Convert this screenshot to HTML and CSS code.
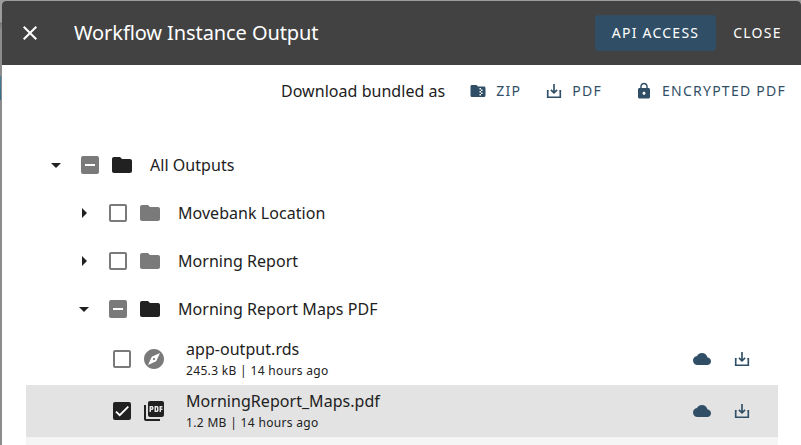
FILE: index.html
```html
<!DOCTYPE html>
<html lang="en">
<head>
<meta charset="utf-8">
<title>Workflow Instance Output</title>
<link rel="stylesheet" href="styles.css">
</head>
<body>
<svg class="defs" aria-hidden="true">
  <symbol id="folder" viewBox="0 0 24 24"><path d="M10 4H4c-1.1 0-1.99.9-1.99 2L2 18c0 1.100.9 2 2 2h16c1.100 0 2-.9 2-2V8c0-1.100-.9-2-2-2h-8l-2-2z"/></symbol>
  <symbol id="zip" viewBox="0 0 24 24"><path d="M20 6h-8l-2-2H4c-1.100 0-2 .9-2 2v12c0 1.100.9 2 2 2h16c1.100 0 2-.9 2-2V8c0-1.100-.9-2-2-2zm-2 6h-2v2h2v2h-2v2h-2v-2h2v-2h-2v-2h2v-2h-2V8h2v2h2v2z"/></symbol>
  <symbol id="download" viewBox="0 0 18 18"><path d="M3.700 8.700h-1v6.500h12.600V8.700h-1M9 2v8.500M5.900 7.800L9 10.900l3.100-3.100" fill="none" stroke="currentColor" stroke-width="1.650"/></symbol>
  <symbol id="lock" viewBox="0 0 24 24"><path d="M18 8h-1V6c0-2.760-2.240-5-5-5S7 3.240 7 6v2H6c-1.100 0-2 .9-2 2v10c0 1.100.9 2 2 2h12c1.100 0 2-.9 2-2V10c0-1.100-.9-2-2-2zm-6 9c-1.100 0-2-.9-2-2s.9-2 2-2 2 .9 2 2-.9 2-2 2zm3.100-9H8.900V6c0-1.710 1.390-3.100 3.100-3.100s3.100 1.390 3.100 3.100v2z"/></symbol>
  <symbol id="cloud" viewBox="0 0 24 24"><path d="M19.350 10.040C18.670 6.590 15.640 4 12 4 9.110 4 6.600 5.640 5.350 8.040 2.340 8.360 0 10.910 0 14c0 3.310 2.690 6 6 6h13c2.760 0 5-2.240 5-5 0-2.640-2.050-4.780-4.650-4.960z"/></symbol>
  <symbol id="compass" viewBox="0 0 24 24"><path d="M12 10.900c-.61 0-1.100.49-1.100 1.100s.49 1.100 1.100 1.100 1.100-.49 1.100-1.100-.49-1.100-1.100-1.100zM12 2C6.480 2 2 6.480 2 12s4.480 10 10 10 10-4.480 10-10S17.520 2 12 2zm2.190 12.190L6 18l3.810-8.190L18 6l-3.810 8.190z"/></symbol>
  <symbol id="pdf" viewBox="0 0 24 24"><path d="M20 2H8c-1.100 0-2 .9-2 2v12c0 1.100.9 2 2 2h12c1.100 0 2-.9 2-2V4c0-1.100-.9-2-2-2zm-8.500 7.500c0 .83-.67 1.500-1.500 1.500H9v2H7.500V7H10c.83 0 1.500.67 1.500 1.500v1zm5 2c0 .83-.67 1.500-1.500 1.500h-2.500V7H15c.83 0 1.500.67 1.500 1.500v3zm4-3H19v1h1.500V11H19v2h-1.500V7h3v1.500zM9 9.500h1v-1H9v1zM4 6H2v14c0 1.100.9 2 2 2h14v-2H4V6zm10 5.500h1v-3h-1v3z"/></symbol>
  <symbol id="down" viewBox="0 0 24 24"><path d="M7 10l5 5 5-5z"/></symbol>
  <symbol id="right" viewBox="0 0 24 24"><path d="M10 17l5-5-5-5v10z"/></symbol>
  <symbol id="close" viewBox="0 0 24 24"><path d="M19 6.410L17.590 5 12 10.590 6.410 5 5 6.410 10.590 12 5 17.590 6.410 19 12 13.410 17.590 19 19 17.590 13.410 12z"/></symbol>
</svg>
<div class="dialog">
  <header class="toolbar">
    <svg class="icon close"><use href="#close"/></svg>
    <h1>Workflow Instance Output</h1>
    <button class="btn primary">API ACCESS</button>
    <button class="btn plain">CLOSE</button>
  </header>
  <div class="bundle">
    <span class="label">Download bundled as</span>
    <button class="btn link"><svg class="small"><use href="#zip"/></svg>ZIP</button>
    <button class="btn link"><svg class="small"><use href="#download"/></svg>PDF</button>
    <button class="btn link lock"><svg class="small"><use href="#lock"/></svg>ENCRYPTED PDF</button>
  </div>
  <main class="tree">
    <div class="node">
      <svg class="icon arrow"><use href="#down"/></svg><span class="box mixed"></span><svg class="icon"><use href="#folder"/></svg><span class="name">All Outputs</span>
    </div>
    <div class="node child">
      <svg class="icon arrow"><use href="#right"/></svg><span class="box"></span><svg class="icon muted"><use href="#folder"/></svg><span class="name">Movebank Location</span>
    </div>
    <div class="node child">
      <svg class="icon arrow"><use href="#right"/></svg><span class="box"></span><svg class="icon muted"><use href="#folder"/></svg><span class="name">Morning Report</span>
    </div>
    <div class="node child">
      <svg class="icon arrow"><use href="#down"/></svg><span class="box mixed"></span><svg class="icon"><use href="#folder"/></svg><span class="name">Morning Report Maps PDF</span>
    </div>
    <div class="file">
      <span class="box"></span><svg class="icon muted"><use href="#compass"/></svg>
      <div class="info"><div class="title">app-output.rds</div><div class="meta">245.3 kB | 14 hours ago</div></div>
      <svg class="small action"><use href="#cloud"/></svg><svg class="small action"><use href="#download"/></svg>
    </div>
    <div class="file selected">
      <span class="box checked"><svg viewBox="0 0 24 24"><path d="M1.730 12.910L8.100 19.280 22.790 4.590"/></svg></span><svg class="icon"><use href="#pdf"/></svg>
      <div class="info"><div class="title">MorningReport_Maps.pdf</div><div class="meta">1.2 MB | 14 hours ago</div></div>
      <svg class="small action"><use href="#cloud"/></svg><svg class="small action"><use href="#download"/></svg>
    </div>
    <div class="file next"></div>
  </main>
</div>
</body>
</html>
```
FILE: styles.css
```css
* { box-sizing: border-box; }
html, body { height: 100%; }
body {
  margin: 0;
  padding: 1px 0 0 2px;
  overflow: hidden;
  color: #212121;
  background:
    linear-gradient(#4b7d99, #356985) 0 76px / 1px 24px no-repeat,
    linear-gradient(#9b9d9c 0 22px, #777 23px, #8c8c8c 30px, #8c8c8c);
  font: 16px/24px "Noto Sans", sans-serif;
  letter-spacing: .04px;
}
.defs { position: absolute; width: 0; height: 0; }
svg { display: block; flex: none; fill: currentColor; }
.dialog { height: 444px; overflow: hidden; background: #fff; border-radius: 4px 4px 0 0; }
.toolbar { display: flex; align-items: center; height: 64px; padding: 0 2px 0 16px; background: #424242; color: #fff; }
.icon { width: 24px; height: 24px; }
.close { margin-right: 32px; }
h1 { flex: 1; margin: 0; font-size: 20px; font-weight: 400; line-height: 32px; letter-spacing: -.09px; }
.btn { display: flex; align-items: center; height: 36px; padding: 0; border: 0; border-radius: 4px; background: none; color: inherit; font: 14px/36px "Noto Sans", sans-serif; letter-spacing: 1.250px; white-space: nowrap; }
.primary { justify-content: center; width: 121px; background: #304f66; }
.plain { justify-content: center; width: 83px; }
.bundle { display: flex; align-items: center; justify-content: flex-end; height: 52px; padding-right: 15px; }
.label { margin-right: 24px; }
.link { color: #304f66; margin-left: 24px; }
.label + .link { margin-left: 0; }
.link.lock { margin-left: 33px; }
.small { width: 18px; height: 18px; }
.link .small { margin-right: 9px; }
.tree { padding: 24px 23px 0 24px; }
.node { display: flex; align-items: center; height: 48px; padding-left: 18px; }
.child { padding-left: 46px; }
.arrow { margin-right: 13px; }
.box { flex: none; width: 18px; height: 18px; margin-right: 11px; border: 2px solid #7a7a7a; border-radius: 2px; }
.mixed { display: flex; align-items: center; justify-content: center; background: #7a7a7a; }
.mixed::after { content: ""; width: 10px; height: 2px; background: #fff; }
.checked { border-color: #212121; background: #212121; }
.checked svg { width: 14px; height: 14px; fill: none; stroke: #fff; stroke-width: 3.100; }
.muted { color: #7a7a7a; }
.name { margin-left: 16px; }
.file { display: flex; align-items: center; height: 52px; padding: 0 27px 0 87px; }
.info { flex: 1; margin-left: 20px; }
.title { line-height: 23px; }
.meta { font-size: 12px; line-height: 20px; letter-spacing: .33px; }
.action { color: #304f66; }
.action + .action { margin-left: 22px; }
.selected { background: #e3e3e3; }
.next { background: #f5f5f5; }
```
